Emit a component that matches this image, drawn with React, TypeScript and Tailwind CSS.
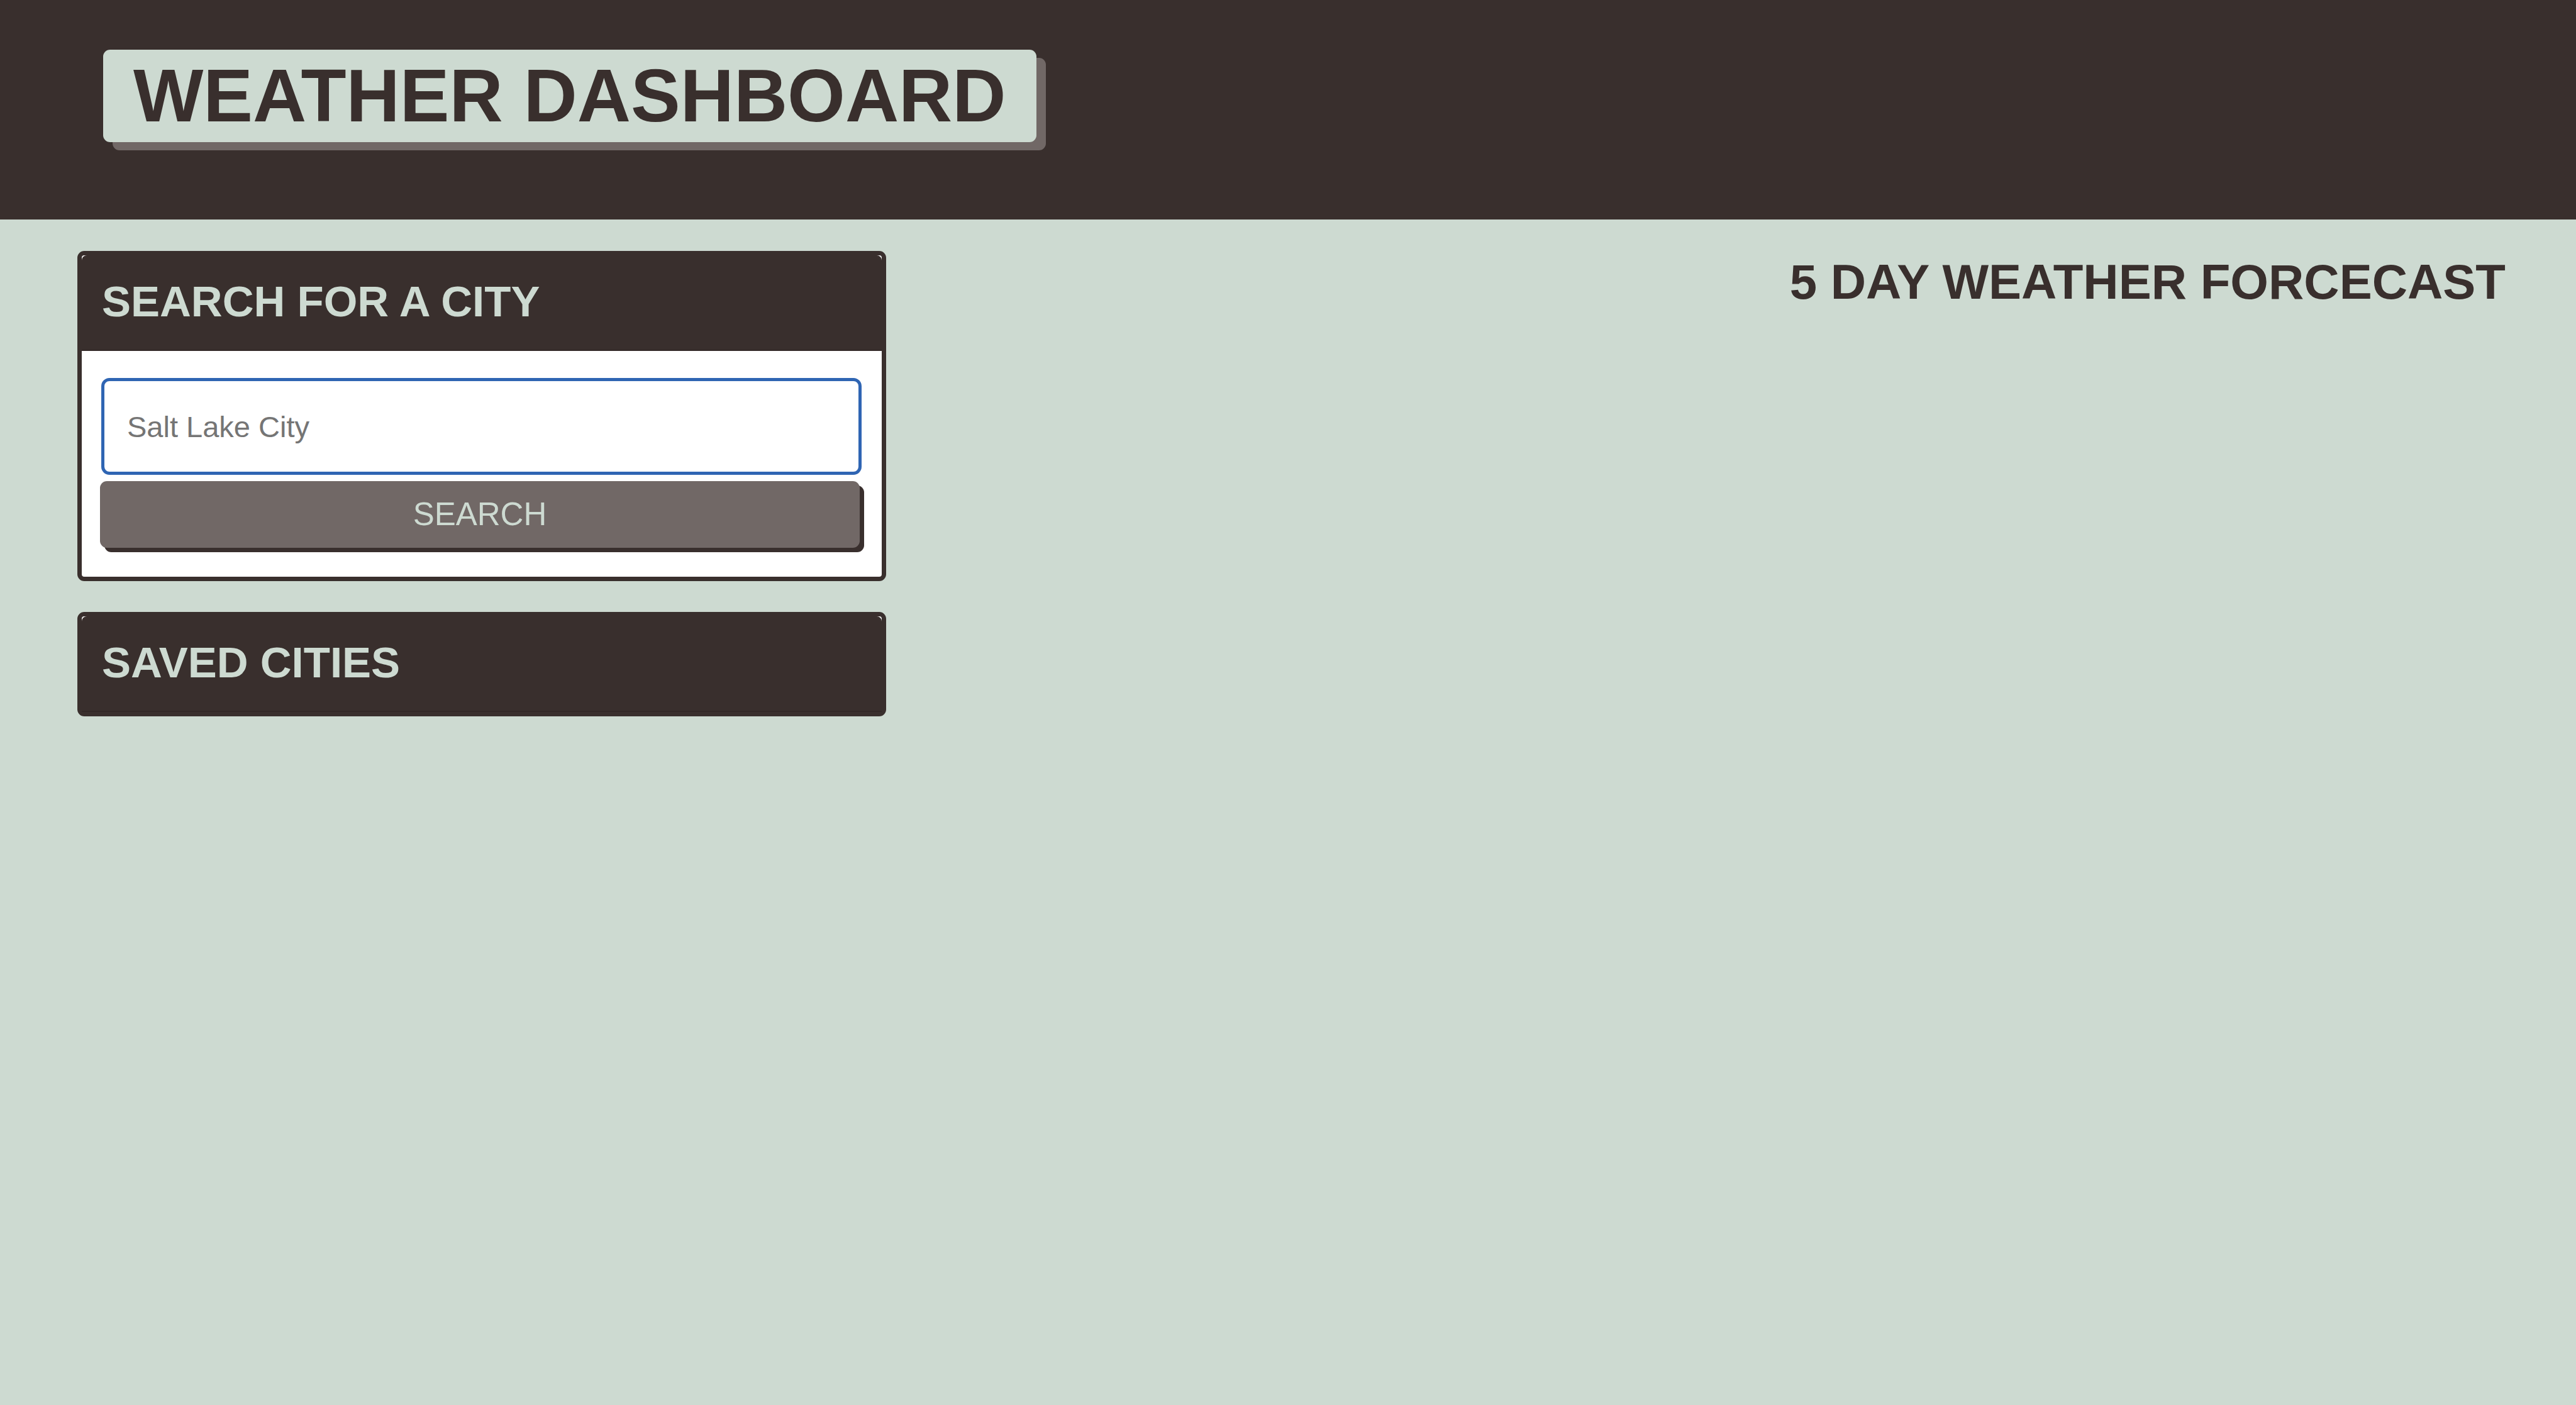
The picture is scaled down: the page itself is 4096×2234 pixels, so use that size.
import type { ReactNode } from "react";

function PanelTitle({ children }: { children: ReactNode }) {
  return (
    <h2 className="rounded-t-[8px] border-b-2 border-[#322827] bg-[#392f2d] px-[32px] pt-[25px] pb-[27px] text-[69px] leading-[98px] font-bold text-[#cddad1]">
      {children}
    </h2>
  );
}

export default function App() {
  return (
    <div className="min-h-screen bg-[#cddad1] font-['Liberation_Sans',Arial,sans-serif] text-[#392f2d]">
      <header className="flex items-start bg-[#392f2d] px-[164px] pt-[79px] pb-[123px]">
        <h1 className="rounded-[11px] bg-[#cddad1] px-[48px] text-[118px] leading-[147px] font-bold whitespace-nowrap shadow-[15px_13px_0_#716866]">
          WEATHER DASHBOARD
        </h1>
      </header>
      <main className="flex items-start justify-between pt-[50px] pr-[112px] pl-[123px]">
        <aside className="flex w-[1286px] flex-col gap-[49px]">
          <section className="rounded-[11px] border-[7px] border-[#392f2d] bg-white">
            <PanelTitle>SEARCH FOR A CITY</PanelTitle>
            <form
              className="flex flex-col gap-[10px] pt-[43px] pr-[32px] pb-[46px] pl-[29px]"
              onSubmit={(e) => e.preventDefault()}
            >
              <input
                type="text"
                aria-label="City"
                placeholder="Salt Lake City"
                className="ml-[2px] h-[154px] rounded-[13px] border-[5px] border-[#2f65b3] px-[36px] text-[47px] outline-none placeholder:text-[#757575]"
              />
              <button
                type="submit"
                className="mr-[3px] h-[106px] rounded-[11px] bg-[#716866] text-[51px] text-[#cddad1] shadow-[7px_7px_0_#392f2d]"
              >
                SEARCH
              </button>
            </form>
          </section>
          <section className="rounded-[11px] border-[7px] border-[#392f2d] bg-white">
            <PanelTitle>SAVED CITIES</PanelTitle>
          </section>
        </aside>
        <h2 className="text-[78px] leading-[98px] font-bold whitespace-nowrap">5 DAY WEATHER FORCECAST</h2>
      </main>
    </div>
  );
}
